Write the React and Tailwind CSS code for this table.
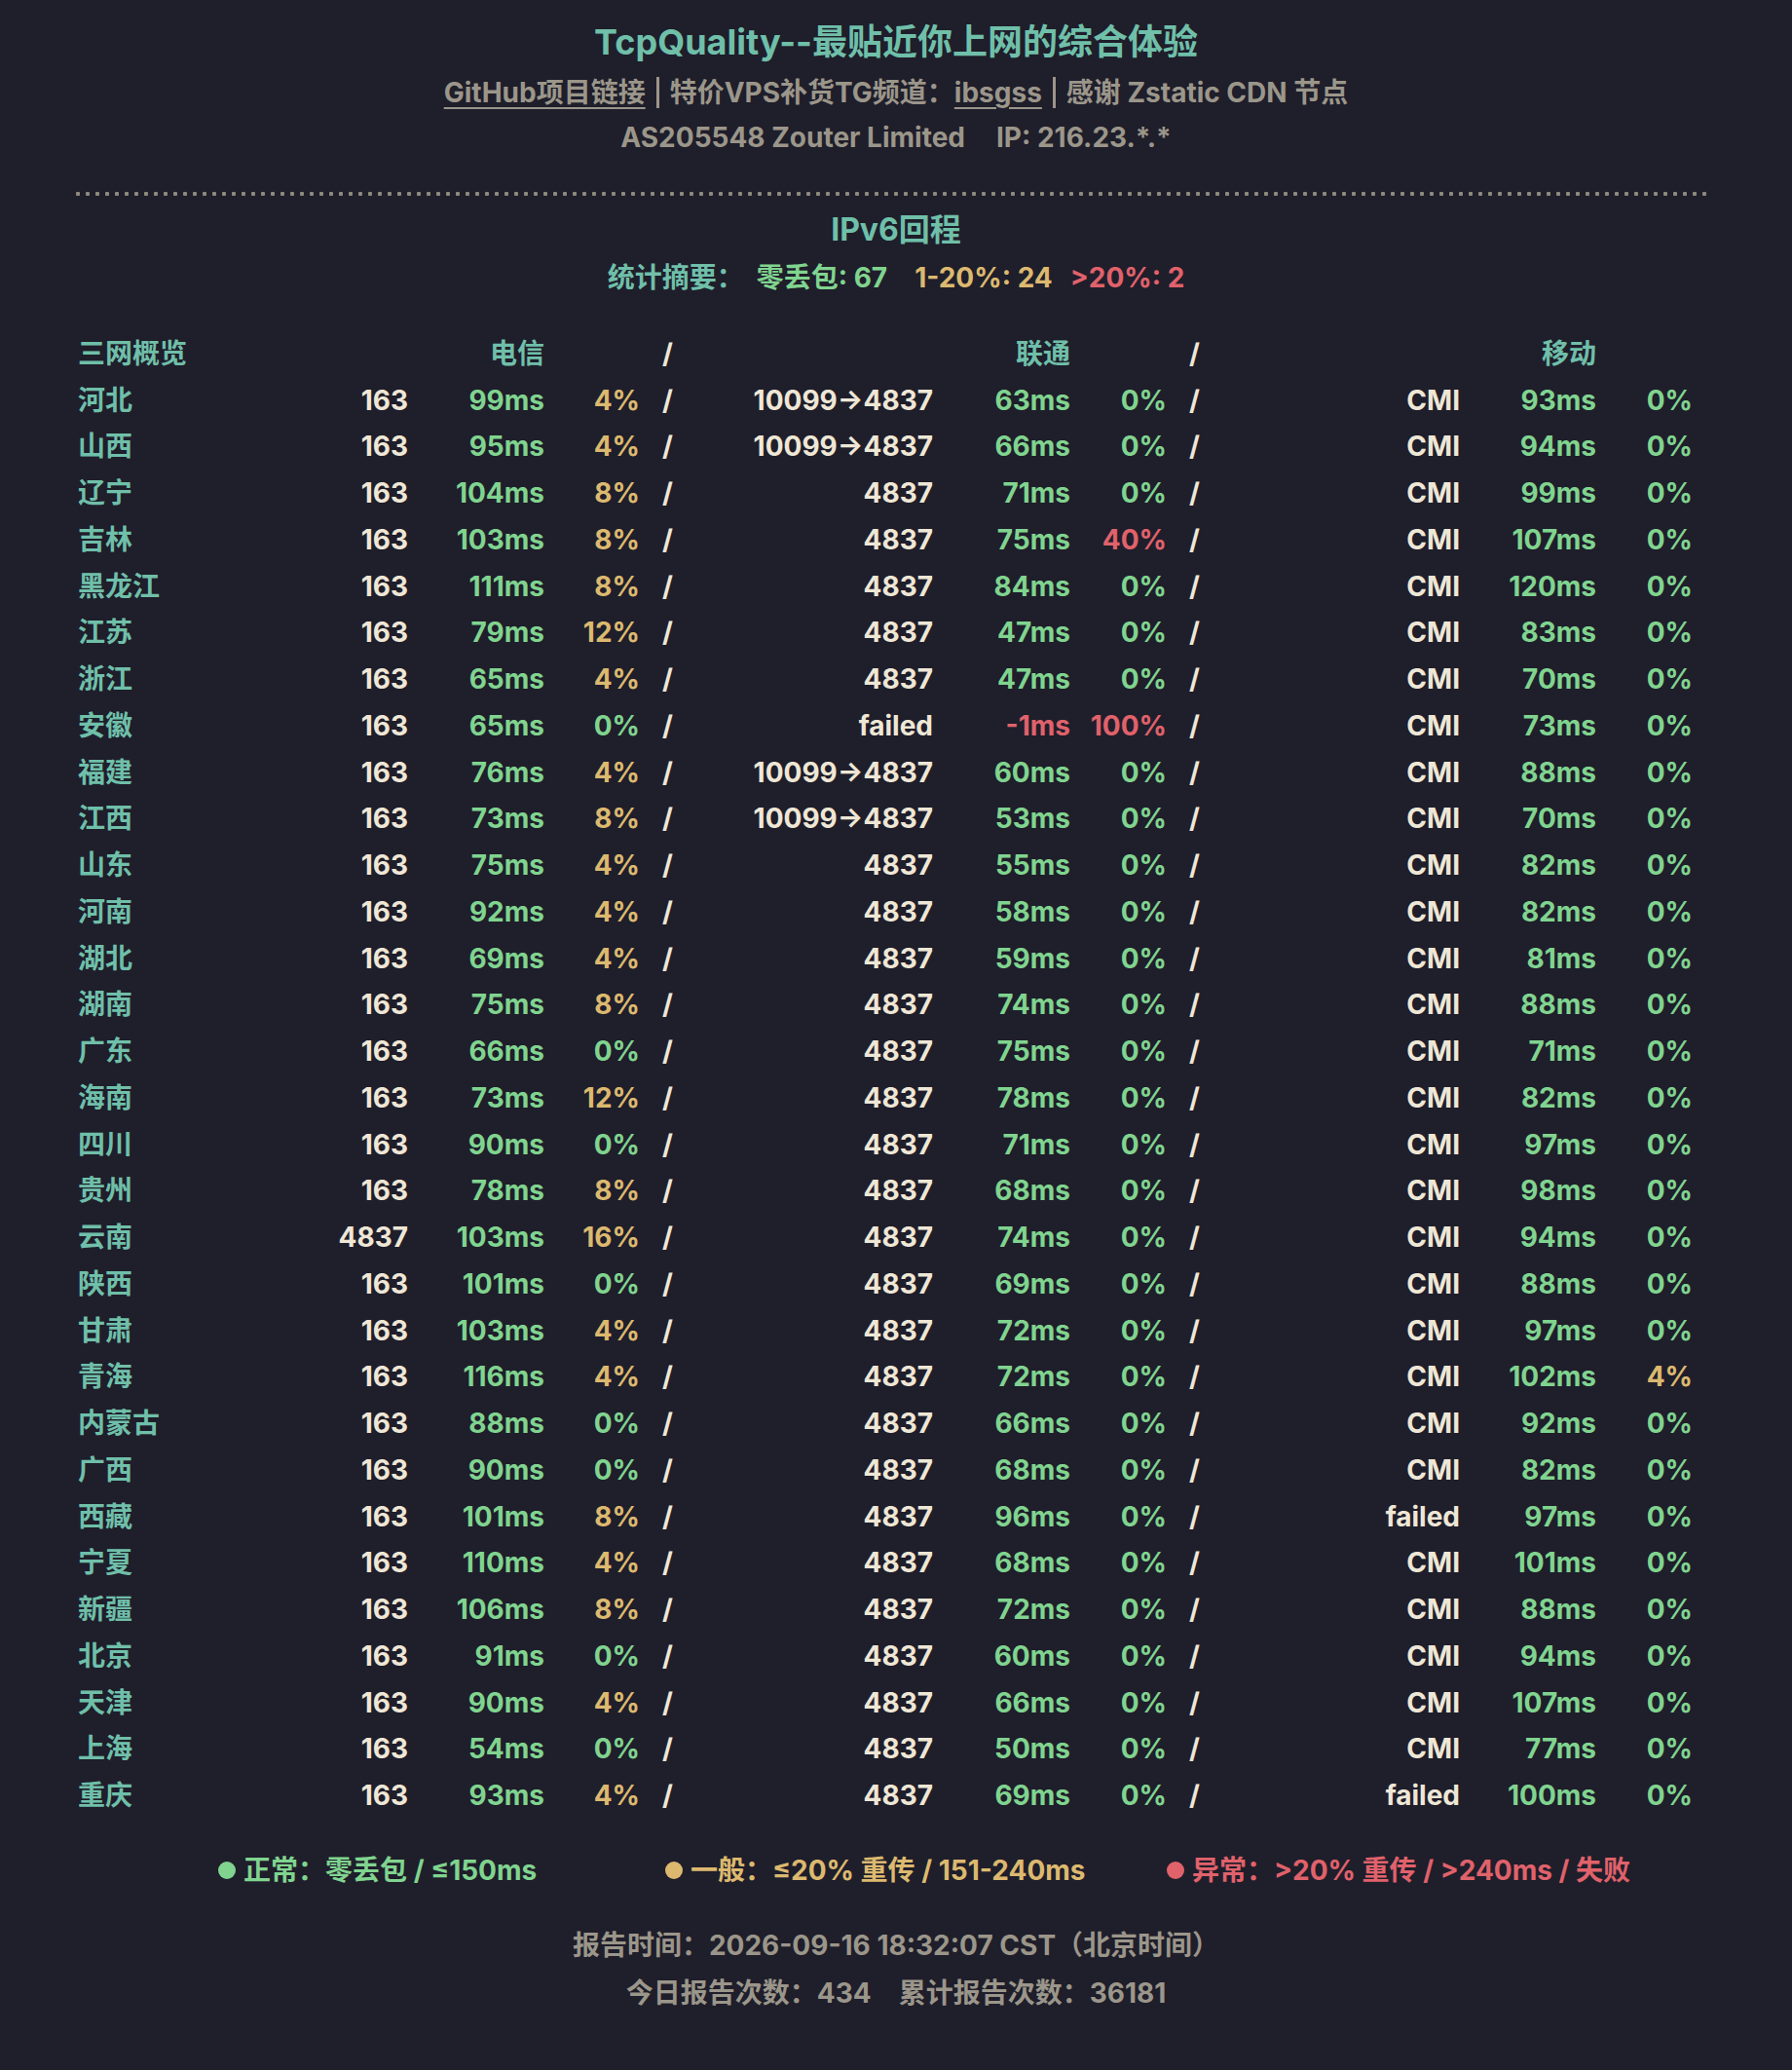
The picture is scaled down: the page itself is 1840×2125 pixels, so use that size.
import React from "react";

const rows = [
  ["河北", "163", "99ms", "4%", "10099→4837", "63ms", "0%", "CMI", "93ms", "0%"],
  ["山西", "163", "95ms", "4%", "10099→4837", "66ms", "0%", "CMI", "94ms", "0%"],
  ["辽宁", "163", "104ms", "8%", "4837", "71ms", "0%", "CMI", "99ms", "0%"],
  ["吉林", "163", "103ms", "8%", "4837", "75ms", "40%", "CMI", "107ms", "0%"],
  ["黑龙江", "163", "111ms", "8%", "4837", "84ms", "0%", "CMI", "120ms", "0%"],
  ["江苏", "163", "79ms", "12%", "4837", "47ms", "0%", "CMI", "83ms", "0%"],
  ["浙江", "163", "65ms", "4%", "4837", "47ms", "0%", "CMI", "70ms", "0%"],
  ["安徽", "163", "65ms", "0%", "failed", "-1ms", "100%", "CMI", "73ms", "0%"],
  ["福建", "163", "76ms", "4%", "10099→4837", "60ms", "0%", "CMI", "88ms", "0%"],
  ["江西", "163", "73ms", "8%", "10099→4837", "53ms", "0%", "CMI", "70ms", "0%"],
  ["山东", "163", "75ms", "4%", "4837", "55ms", "0%", "CMI", "82ms", "0%"],
  ["河南", "163", "92ms", "4%", "4837", "58ms", "0%", "CMI", "82ms", "0%"],
  ["湖北", "163", "69ms", "4%", "4837", "59ms", "0%", "CMI", "81ms", "0%"],
  ["湖南", "163", "75ms", "8%", "4837", "74ms", "0%", "CMI", "88ms", "0%"],
  ["广东", "163", "66ms", "0%", "4837", "75ms", "0%", "CMI", "71ms", "0%"],
  ["海南", "163", "73ms", "12%", "4837", "78ms", "0%", "CMI", "82ms", "0%"],
  ["四川", "163", "90ms", "0%", "4837", "71ms", "0%", "CMI", "97ms", "0%"],
  ["贵州", "163", "78ms", "8%", "4837", "68ms", "0%", "CMI", "98ms", "0%"],
  ["云南", "4837", "103ms", "16%", "4837", "74ms", "0%", "CMI", "94ms", "0%"],
  ["陕西", "163", "101ms", "0%", "4837", "69ms", "0%", "CMI", "88ms", "0%"],
  ["甘肃", "163", "103ms", "4%", "4837", "72ms", "0%", "CMI", "97ms", "0%"],
  ["青海", "163", "116ms", "4%", "4837", "72ms", "0%", "CMI", "102ms", "4%"],
  ["内蒙古", "163", "88ms", "0%", "4837", "66ms", "0%", "CMI", "92ms", "0%"],
  ["广西", "163", "90ms", "0%", "4837", "68ms", "0%", "CMI", "82ms", "0%"],
  ["西藏", "163", "101ms", "8%", "4837", "96ms", "0%", "failed", "97ms", "0%"],
  ["宁夏", "163", "110ms", "4%", "4837", "68ms", "0%", "CMI", "101ms", "0%"],
  ["新疆", "163", "106ms", "8%", "4837", "72ms", "0%", "CMI", "88ms", "0%"],
  ["北京", "163", "91ms", "0%", "4837", "60ms", "0%", "CMI", "94ms", "0%"],
  ["天津", "163", "90ms", "4%", "4837", "66ms", "0%", "CMI", "107ms", "0%"],
  ["上海", "163", "54ms", "0%", "4837", "50ms", "0%", "CMI", "77ms", "0%"],
  ["重庆", "163", "93ms", "4%", "4837", "69ms", "0%", "failed", "100ms", "0%"],
];

function latClass(v) {
  const n = parseInt(v, 10);
  if (n < 0 || n > 240) return "text-[#e0626b]";
  if (n > 150) return "text-[#dcb96f]";
  return "text-[#80d48f]";
}
function lossClass(v) {
  const n = parseInt(v, 10);
  if (n === 0) return "text-[#80d48f]";
  if (n <= 20) return "text-[#dcb96f]";
  return "text-[#e0626b]";
}

const cream = "text-[#efe7d6]";

function Row({ r }) {
  return (
    <div className="flex h-[47.75px] items-center whitespace-nowrap">
      <div className="w-[219px] text-[#6fbfa9]">{r[0]}</div>
      <div className={`w-[120px] text-right ${cream}`}>{r[1]}</div>
      <div className={`w-[140px] text-right ${latClass(r[2])}`}>{r[2]}</div>
      <div className={`w-[98px] text-right ${lossClass(r[3])}`}>{r[3]}</div>
      <div className={`w-[43px] pl-[23px] ${cream}`}>/</div>
      <div className={`w-[258px] text-right ${cream}`}>{r[4]}</div>
      <div className={`w-[141px] text-right ${latClass(r[5])}`}>{r[5]}</div>
      <div className={`w-[99px] text-right ${lossClass(r[6])}`}>{r[6]}</div>
      <div className={`w-[43px] pl-[23px] ${cream}`}>/</div>
      <div className={`w-[258px] text-right ${cream}`}>{r[7]}</div>
      <div className={`w-[140px] text-right ${latClass(r[8])}`}>{r[8]}</div>
      <div className={`w-[99px] text-right ${lossClass(r[9])}`}>{r[9]}</div>
    </div>
  );
}

export default function App() {
  return (
    <div
      className="w-[1840px] min-h-[2125px] bg-[#1f1e2b] font-bold text-[28px] pt-[18px]"
      style={{ fontFamily: 'Inter, "Noto Sans CJK SC", "Noto Sans", sans-serif' }}
    >
      <div className="h-[50px] flex items-center justify-center text-[36px] text-[#6fbfa9]">
        TcpQuality--最贴近你上网的综合体验
      </div>
      <div className="mt-[4px] h-[46px] flex items-center justify-center text-[#9b968a]">
        <span className="underline underline-offset-[5px] decoration-2">GitHub项目链接</span>
        <span className="mx-[11px] inline-block w-[3px] h-[32px] bg-[#9b968a]"></span>
        <span>特价VPS补货TG频道：</span>
        <span className="underline underline-offset-[5px] decoration-2">ibsgss</span>
        <span className="mx-[11px] inline-block w-[3px] h-[32px] bg-[#9b968a]"></span>
        <span>感谢 Zstatic CDN 节点</span>
      </div>
      <div className="h-[46px] flex items-center justify-center text-[#9b968a]">
        <span>AS205548 Zouter Limited</span>
        <span className="ml-[32px]">IP: 216.23.*.*</span>
      </div>
      <div className="ml-[75px] mt-[33px] w-[1683px] h-[4px] bg-[radial-gradient(circle,#8e897d_2px,transparent_2.5px)] bg-[length:10px_4px]"></div>
      <div className="mt-[13px] h-[44px] flex items-center justify-center text-[32px] text-[#6fbfa9]">
        IPv6回程
      </div>
      <div className="mt-[5px] h-[44px] flex items-center justify-center">
        <span className="text-[#6fbfa9]">统计摘要：</span>
        <span className="ml-[13px] text-[#80d48f]">零丢包: 67</span>
        <span className="ml-[28px] text-[#dcb96f]">1-20%: 24</span>
        <span className="ml-[18px] text-[#e0626b]">&gt;20%: 2</span>
      </div>

      <div className="ml-[80px] mt-[32px]">
        <div className="flex h-[47.75px] items-center whitespace-nowrap">
          <div className="w-[219px] text-[#6fbfa9]">三网概览</div>
          <div className="w-[120px]"></div>
          <div className="w-[140px] text-right text-[#6fbfa9]">电信</div>
          <div className="w-[98px]"></div>
          <div className={`w-[43px] pl-[23px] ${cream}`}>/</div>
          <div className="w-[258px]"></div>
          <div className="w-[141px] text-right text-[#6fbfa9]">联通</div>
          <div className="w-[99px]"></div>
          <div className={`w-[43px] pl-[23px] ${cream}`}>/</div>
          <div className="w-[258px]"></div>
          <div className="w-[140px] text-right text-[#6fbfa9]">移动</div>
          <div className="w-[99px]"></div>
        </div>
        {rows.map((r) => (
          <Row key={r[0]} r={r} />
        ))}
      </div>

      <div className="mt-[31px] h-[44px] flex items-center pl-[224px] whitespace-nowrap">
        <div className="w-[459px] flex items-center text-[#80d48f]">
          <span className="inline-block w-[18px] h-[18px] rounded-full bg-[#80d48f] mr-[8px]"></span>
          <span>正常：零丢包 / ≤150ms</span>
        </div>
        <div className="w-[515px] flex items-center text-[#dcb96f]">
          <span className="inline-block w-[18px] h-[18px] rounded-full bg-[#dcb96f] mr-[8px]"></span>
          <span>一般：≤20% 重传 / 151-240ms</span>
        </div>
        <div className="flex items-center text-[#e0626b]">
          <span className="inline-block w-[18px] h-[18px] rounded-full bg-[#e0626b] mr-[8px]"></span>
          <span>异常：&gt;20% 重传 / &gt;240ms / 失败</span>
        </div>
      </div>

      <div className="mt-[33px] h-[44px] flex items-center justify-center text-[#9b968a]">
        报告时间：2026-09-16 18:32:07 CST（北京时间）
      </div>
      <div className="mt-[5px] h-[44px] flex items-center justify-center text-[#9b968a]">
        <span>今日报告次数：434</span>
        <span className="ml-[28px]">累计报告次数：36181</span>
      </div>
    </div>
  );
}
